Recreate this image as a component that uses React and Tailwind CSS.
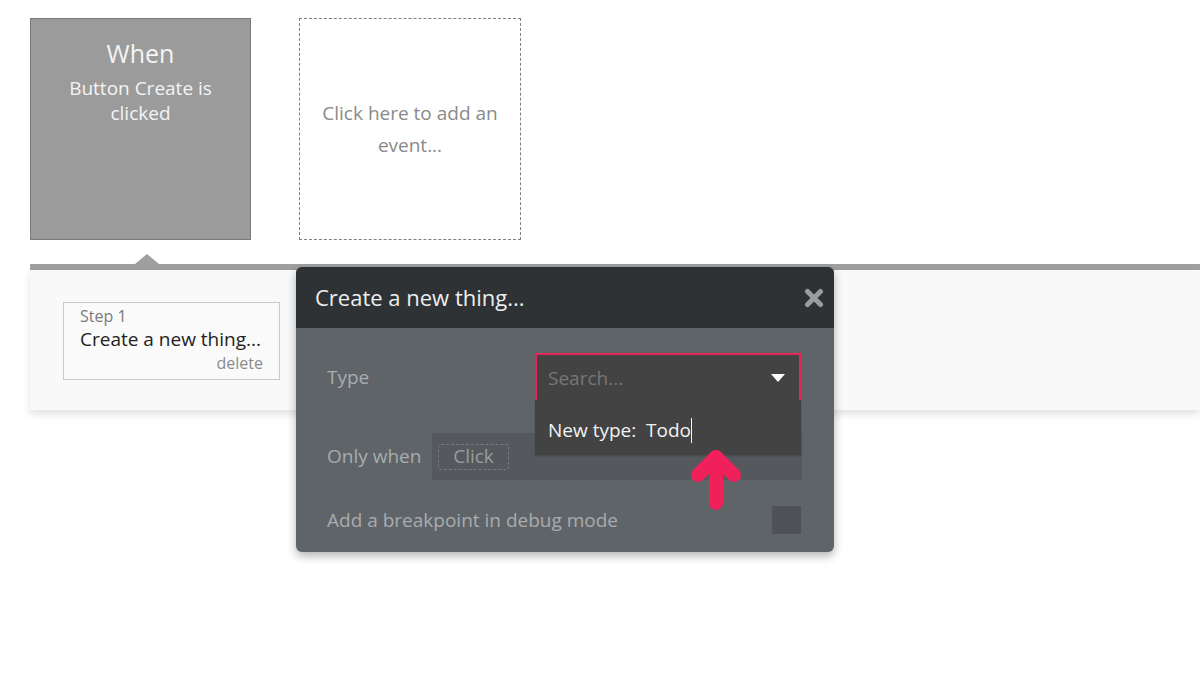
import React from 'react';

const font = { fontFamily: '"Open Sans", "Liberation Sans", sans-serif' };

function CloseIcon() {
  return (
    <svg width="20" height="20" viewBox="0 0 20 20">
      <path d="M3.5 3.5 L16.5 16.5 M16.5 3.5 L3.5 16.5" stroke="#9a9c9e" strokeWidth="5" strokeLinecap="round" />
    </svg>
  );
}

function PinkArrow() {
  return (
    <svg width="60" height="70" viewBox="0 0 60 70">
      <path d="M30 8 L30 54" stroke="#f0215a" strokeWidth="14" strokeLinecap="round" />
      <path d="M12 26 L30 8 L48 26" stroke="#f0215a" strokeWidth="14" strokeLinecap="round" strokeLinejoin="round" fill="none" />
    </svg>
  );
}

function Modal() {
  return (
    <div className="absolute left-[296px] top-[267px] w-[538px] h-[285px] rounded-[6px] bg-[#5f6468] shadow-[0_4px_10px_rgba(0,0,0,0.3)]">
      <div className="h-[61px] rounded-t-[6px] bg-[#2e3234] flex items-center justify-between pl-[19px] pr-[10px]">
        <span className="text-[22px] text-[#eeeeee]">Create a new thing...</span>
        <CloseIcon />
      </div>

      <div className="relative pt-[25px]">
        {/* Type row */}
        <div className="flex items-center h-[48px] pl-[31px] pr-[33px]">
          <span className="text-[19px] text-[#a9acae] w-[208px]">Type</span>
          <div className="flex-1 h-[48px] bg-[#434343] border-t-2 border-x-2 border-[#e8245a] flex items-center justify-between pl-[11px] pr-[14px]">
            <span className="text-[19px] text-[#767676]">Search...</span>
            <svg width="14" height="8" viewBox="0 0 14 8">
              <path d="M0 0 L14 0 L7 8 Z" fill="#ffffff" />
            </svg>
          </div>
        </div>

        {/* Only when row */}
        <div className="flex items-center h-[47px] mt-[32px] pl-[31px] pr-[32px]">
          <span className="text-[19px] text-[#a9acae] w-[105px]">Only when</span>
          <div className="flex-1 h-[47px] bg-[#55595d] flex items-center pl-[6px]">
            <div className="h-[26px] w-[71px] border border-dashed border-[#777b7e] rounded-[3px] flex items-center justify-center text-[19px] text-[#9a9c9e]">
              Click
            </div>
          </div>
        </div>

        {/* Breakpoint row */}
        <div className="flex items-center justify-between h-[28px] mt-[26px] pl-[31px] pr-[33px]">
          <span className="text-[19px] text-[#a9acae]">Add a breakpoint in debug mode</span>
          <div className="w-[29px] h-[28px] bg-[#4e5256]" />
        </div>

        {/* Dropdown list */}
        <div className="absolute left-[239px] top-[72px] w-[266px] h-[55px] bg-[#434343] flex items-center pl-[13px] pt-[6px] shadow-[0_1px_2px_rgba(0,0,0,0.2)]">
          <span className="text-[19px] text-[#f2f2f2] whitespace-pre">New type:  Todo</span>
          <span className="w-[1px] h-[25px] bg-[#f2f2f2]" />
        </div>

        <div className="absolute left-[390px] top-[121px]">
          <PinkArrow />
        </div>
      </div>
    </div>
  );
}

export default function App() {
  return (
    <div className="relative w-[1200px] h-[675px] bg-white overflow-hidden" style={font}>
      <div className="pt-[18px] pl-[30px]">
        <div className="flex gap-[48px]">
          <div className="w-[221px] h-[222px] bg-[#9b9b9b] border border-[#7a7a7a] flex flex-col items-center pt-[20px] text-[#f4f4f4]">
            <div className="text-[25px] leading-[28px]">When</div>
            <div className="text-[19px] leading-[25px] text-center mt-[9px] px-[16px]">
              Button Create is clicked
            </div>
          </div>
          <div className="w-[222px] h-[222px] border border-dashed border-[#7f7f7f] flex items-center justify-center text-center">
            <div className="text-[19px] leading-[32px] text-[#8a8a8a] px-[16px]">
              Click here to add an event...
            </div>
          </div>
        </div>

        <div className="mt-[14px] ml-[105px] w-0 h-0 border-l-[12px] border-r-[12px] border-b-[10px] border-l-transparent border-r-transparent border-b-[#9f9f9f]" />
        <div className="h-[6px] bg-[#9f9f9f]" />
        <div className="h-[140px] bg-[#f9f9f9] shadow-[0_4px_8px_rgba(0,0,0,0.12)] pt-[32px] pl-[33px]">
          <div className="w-[217px] h-[78px] border border-[#c9c9c9] bg-[#fafafa] flex flex-col pl-[16px] pr-[16px] pt-[3px]">
            <span className="text-[16px] leading-[20px] text-[#7a7a7a]">Step 1</span>
            <span className="text-[19px] leading-[26px] text-[#222222]">Create a new thing...</span>
            <span className="text-[16px] leading-[22px] text-[#8a8a8a] self-end">delete</span>
          </div>
        </div>
      </div>

      <Modal />
    </div>
  );
}
